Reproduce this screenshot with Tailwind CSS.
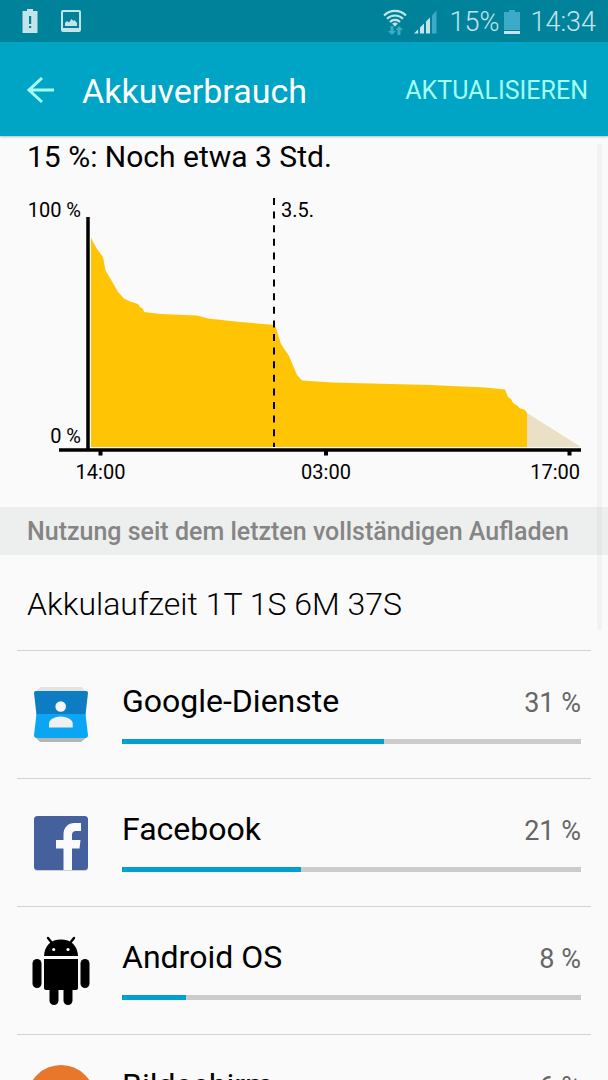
<!DOCTYPE html>
<html lang="de">
<head>
<meta charset="utf-8">
<meta name="viewport" content="width=device-width, initial-scale=1">
<title>Akkuverbrauch</title>
<script src="https://cdn.jsdelivr.net/npm/@tailwindcss/browser@4"></script>
</head>
<body class="flex h-screen flex-col overflow-hidden bg-[#fafafa] font-['Roboto',sans-serif] text-black">

<!-- Status bar -->
<div class="flex h-[42px] shrink-0 items-center justify-between bg-[#00829b] pr-3 pl-[22px] text-[#c4e4ea]">
  <div class="flex items-center gap-[23px]">
    <svg class="h-6 w-4" viewBox="0 0 16 24" fill="currentColor" aria-label="Akku schwach"><path fill-rule="evenodd" d="M5 0h6v2h4.500v22H.5V2H5zM7 7v8h2.200V7zm0 10v2h2.200v-2z"/></svg>
    <svg class="h-[22px] w-5" viewBox="0 0 20 22" aria-label="Bild"><rect x="1" y="1" width="18" height="20" rx="1" fill="none" stroke="currentColor" stroke-width="2"/><path d="M1 18h18v3H1zM4 16v-3l2-2 2 1.500L10.500 9l2 2 1-1L16 13v3z" fill="currentColor"/></svg>
  </div>
  <div class="flex items-center pt-0.5">
    <svg class="mr-[6px] h-[26px] w-6" viewBox="0 0 24 26" aria-label="WLAN"><g fill="none" stroke="currentColor" stroke-width="2.200"><path d="M1 6.500a15.500 15.500 0 0 1 22 0"/><path d="M4 9.800a11.300 11.300 0 0 1 16 0"/><path d="M7 13a7 7 0 0 1 10 0"/></g><path d="M9.200 14.800a4 4 0 0 1 5.600 0L12 17.600z" fill="currentColor"/><path d="M7.500 17h3v5H13l-4 4-4.200-4h2.700zM14.500 26h3v-5h2.700L16 17l-3.500 4h2z" fill="#3dabc8"/></svg>
    <svg class="mr-[13px] h-6 w-6" viewBox="0 0 24 24" fill="currentColor" aria-label="Signal"><path d="M1 23.500 5.200 19.300v4.200zM7 17.500l4-4v10H7zM13 11.500l4-4v16h-4z"/><path d="M19 5.500l4.500-5v23H19z" fill="#3dabc8"/></svg>
    <span class="text-[27px] leading-8 font-light">15%</span>
    <svg class="mr-[10px] ml-[5px] h-6 w-4" viewBox="0 0 16 24" aria-label="Akku"><path d="M5 0h6v2h5v18H0V2h5z" fill="#3dabc8"/><path d="M0 21h16v3H0z" fill="currentColor"/></svg>
    <span class="text-[27px] leading-8 font-light">14:34</span>
  </div>
</div>

<!-- App bar -->
<header class="z-10 flex h-[94px] shrink-0 items-center bg-[#00a4c4] pt-[3px] pr-5 pl-6 text-white shadow-[0_1px_2px_rgba(0,0,0,0.25)]">
  <button type="button" aria-label="Zurück" class="mr-[26px] flex size-8 items-center justify-center text-[#a7fff3]">
    <svg class="h-7 w-8" viewBox="0 0 32 28" fill="none" stroke="currentColor" stroke-width="3"><path d="M30 13H5M18 1 5 13 18 25"/></svg>
  </button>
  <h1 class="grow text-[34px] leading-10">Akkuverbrauch</h1>
  <button type="button" class="text-[25px] leading-8 text-[#a7fff3]">AKTUALISIEREN</button>
</header>

<main class="relative min-h-0 flex-1 overflow-hidden">
  <div class="absolute top-2 right-[6px] h-[486px] w-[5px] rounded-full bg-black/3"></div>

  <h2 class="px-[27px] pt-[3px] text-[30px] leading-9">15 %: Noch etwa 3 Std.</h2>

  <svg class="mt-[21px] block w-full" viewBox="0 0 608 311" font-size="20" role="img" aria-label="Akkuladung im Zeitverlauf">
    <path fill="#ffc403" d="M91 41L92 44 97 53 103 61 105.500 74.500 113 87 118 96 124 102.500 130 105.500 138 108 140 111 143 113 144 116 160 118 197 119.500 208 122.500 240 126 275 129 281 148 289 160 297 179 302 184.500 332 186.500 430 189 485 191.500 505 193.500 508 201 511 203 513 207 518 210 519 212 525 214 527 217V251H91z"/>
    <path fill="#e9e0c6" d="M527 217l54 34h-54z"/>
    <path d="M274 2v249" stroke="#000" stroke-width="2" stroke-dasharray="7 6.600"/>
    <path d="M88 21v233M59 254h522" fill="none" stroke="#000" stroke-width="3.500"/>
    <path d="M100.500 255v4.500M326 255v4.500M569.500 255v4.500" stroke="#000" stroke-width="4"/>
    <g>
      <text x="81" y="21" text-anchor="end">100 %</text>
      <text x="81" y="247" text-anchor="end">0 %</text>
      <text x="281" y="21">3.5.</text>
      <text x="100.500" y="283" text-anchor="middle">14:00</text>
      <text x="326" y="283" text-anchor="middle">03:00</text>
      <text x="580" y="283" text-anchor="end">17:00</text>
    </g>
  </svg>

  <h3 class="bg-[#edefee] px-[27px] pt-[9px] pb-[7px] text-[25px] leading-8 font-medium whitespace-nowrap text-[#858585]">Nutzung seit dem letzten vollständigen Aufladen</h3>

  <p class="px-[27px] pt-[29px] pb-[26px] text-[32px] leading-10 font-light">Akkulaufzeit 1T 1S 6M 37S</p>

  <ul class="mx-[17px]">
    <li class="flex h-32 border-t border-[#d2d2d2] pr-[10px] pl-[15px]">
      <svg class="mt-[34px] mr-8 h-[60px] w-[58px] shrink-0" viewBox="0 0 58 60" aria-hidden="true">
        <path d="M8 2h42l4 6H3z" fill="#e3e3e3"/><path d="M3 52h52l-6 5H8z" fill="#b5b5b5"/>
        <path d="M4 6h50q2 0 2 2l-2.500 22h-49L2 8q0-2 2-2z" fill="#0c7dc2"/>
        <path d="M4.500 29h49L56 50q0 3-3 3H5q-3 0-3-3z" fill="#0ba6f3"/>
        <circle cx="28.700" cy="21.500" r="5.300" fill="#f5f5f5"/><path d="M17 42.500v-4c0-4 6-7 11.700-7s12 3 12 7v4z" fill="#f0f0f0"/>
      </svg>
      <div class="grow pt-8">
        <div class="flex items-baseline justify-between"><span class="text-[32px] leading-9">Google-Dienste</span><span class="text-[27px] leading-9 text-[#666]">31 %</span></div>
        <div class="mt-[18px] h-[5px] bg-[#cbcbcb]" role="progressbar" aria-label="Google-Dienste" aria-valuenow="31"><div class="h-full bg-[#00a0d2]" style="width:57%"></div></div>
      </div>
    </li>
    <li class="flex h-32 border-t border-[#d2d2d2] pr-[10px] pl-[15px]">
      <svg class="mt-[34px] mr-8 h-[60px] w-[58px] shrink-0" viewBox="0 0 58 60" aria-hidden="true">
        <rect x="2" y="4" width="54" height="54" rx="3.500" fill="#cfcfd2"/><rect x="2" y="3" width="54" height="54" rx="3.500" fill="#45619d"/>
        <path d="M31.500 57V35.500H24V27h7.500v-5.500c0-7 4.500-11.500 11-11.500H49v8h-4.500c-3.500 0-4.500 1.500-4.500 4.500V27h8.500l-1 8.500H40V57z" fill="#fafafa"/>
      </svg>
      <div class="grow pt-8">
        <div class="flex items-baseline justify-between"><span class="text-[32px] leading-9">Facebook</span><span class="text-[27px] leading-9 text-[#666]">21 %</span></div>
        <div class="mt-[18px] h-[5px] bg-[#cbcbcb]" role="progressbar" aria-label="Facebook" aria-valuenow="21"><div class="h-full bg-[#00a0d2]" style="width:39%"></div></div>
      </div>
    </li>
    <li class="flex h-32 border-t border-[#d2d2d2] pr-[10px] pl-[15px]">
      <svg class="mt-7 mr-8 h-[72px] w-[58px] shrink-0" viewBox="0 0 58 72" aria-hidden="true">
        <path d="M12 21C12.500 10.500 19 4.500 29 4.500s16.500 6 17 16.500z"/>
        <path d="M16 3 20 8M42 3 38 8" stroke="#000" stroke-width="2.400" stroke-linecap="round"/>
        <circle cx="21.700" cy="14.500" r="1.600" fill="#fafafa"/><circle cx="36" cy="14.500" r="1.600" fill="#fafafa"/>
        <path d="M12 24h34v29q0 2-2 2H14q-2 0-2-2z"/>
        <rect x=".5" y="24" width="9" height="29" rx="4.500"/><rect x="48.500" y="24" width="9" height="29" rx="4.500"/>
        <rect x="17.500" y="48" width="9" height="22" rx="4.500"/><rect x="31.500" y="48" width="9" height="22" rx="4.500"/>
      </svg>
      <div class="grow pt-8">
        <div class="flex items-baseline justify-between"><span class="text-[32px] leading-9">Android OS</span><span class="text-[27px] leading-9 text-[#666]">8 %</span></div>
        <div class="mt-[18px] h-[5px] bg-[#cbcbcb]" role="progressbar" aria-label="Android OS" aria-valuenow="8"><div class="h-full bg-[#00a0d2]" style="width:14%"></div></div>
      </div>
    </li>
    <li class="flex h-32 border-t border-[#d2d2d2] pr-[10px] pl-[15px]">
      <svg class="mt-[30px] mr-8 h-[68px] w-[58px] shrink-0 overflow-visible" viewBox="0 0 58 68" aria-hidden="true"><circle cx="29" cy="34" r="34" fill="#e8762b"/></svg>
      <div class="grow pt-8">
        <div class="flex items-baseline justify-between"><span class="text-[32px] leading-9">Bildschirm</span><span class="text-[27px] leading-9 text-[#666]">6 %</span></div>
        <div class="mt-[18px] h-[5px] bg-[#cbcbcb]" role="progressbar" aria-label="Bildschirm" aria-valuenow="6"><div class="h-full bg-[#00a0d2]" style="width:11%"></div></div>
      </div>
    </li>
  </ul>
</main>
</body>
</html>
